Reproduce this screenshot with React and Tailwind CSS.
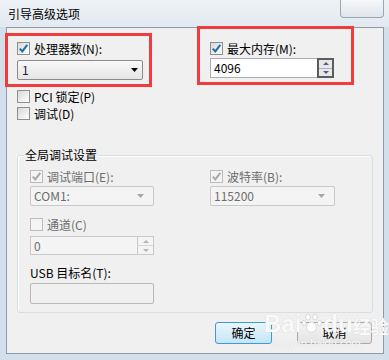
// App.jsx — Windows 7 style "引导高级选项" dialog
import React from 'react';

function Check({ checked, disabled }) {
  return (
    <span
      className={
        disabled
          ? 'w-[13px] h-[13px] shrink-0 border border-[#bcbcbc] bg-[#f4f4f4] flex items-center justify-center'
          : 'w-[13px] h-[13px] shrink-0 border border-[#8e8f8f] bg-linear-to-br from-[#d8d8d8] to-[#ffffff] flex items-center justify-center'
      }
    >
      {checked && (
        <svg width="11" height="11" viewBox="0 0 11 11">
          <path
            d="M1.8 5.6 L4.3 8.4 L9.3 1.8"
            fill="none"
            stroke={disabled ? '#a9a9a9' : '#1d6fa5'}
            strokeWidth="2"
          />
        </svg>
      )}
    </span>
  );
}

function CheckRow({ checked, disabled, children }) {
  return (
    <div className="flex items-center h-[13px] gap-[4px]">
      <Check checked={checked} disabled={disabled} />
      <span className={disabled ? 'text-[12px] leading-[14px] text-[#6d6d6d]' : 'text-[12px] leading-[14px] text-black'}>
        {children}
      </span>
    </div>
  );
}

function Combo({ value, disabled, w }) {
  return (
    <div
      className={
        disabled
          ? `${w} h-[20px] rounded-[2px] border border-[#c9c9c9] bg-[#f4f4f4] flex items-center justify-between pl-[3px] pr-[9px]`
          : `${w} h-[20px] rounded-[2px] border border-[#8a8a8a] bg-linear-to-b from-[#f8f8f8] to-[#e6e6e6] flex items-center justify-between pl-[4px] pr-[4px]`
      }
    >
      <span className={disabled ? 'text-[12px] leading-[14px] text-[#6d6d6d]' : 'text-[12px] leading-[14px] text-[#1a1a4a]'}>
        {value}
      </span>
      <svg width="7" height="4" viewBox="0 0 7 4">
        <path d="M0 0 H7 L3.5 4 Z" fill={disabled ? '#a6a6a6' : '#000'} />
      </svg>
    </div>
  );
}

function Spin({ value, disabled }) {
  const arrow = disabled ? '#b4b4b4' : '#4a5f8f';
  return (
    <div className={disabled ? 'flex w-[124px] h-[19px]' : 'flex w-[124px] h-[20px]'}>
      <div
        className={
          disabled
            ? 'flex-1 border border-[#c9c9c9] border-r-0 bg-[#f4f4f4] flex items-center pl-[3px] text-[12px] leading-[14px] text-[#6d6d6d]'
            : 'flex-1 border border-[#abadb3] border-r-0 bg-white flex items-center pl-[3px] text-[12px] leading-[14px] text-black'
        }
      >
        {value}
      </div>
      <div
        className={
          disabled
            ? 'w-[17px] border border-[#c9c9c9] bg-[#f4f4f4] flex flex-col'
            : 'w-[17px] border-2 border-[#5c5c5c] bg-[#d9d9d9] flex flex-col'
        }
      >
        <div className={disabled ? 'flex-1 border-b border-[#d6d6d6] flex items-center justify-center' : 'flex-1 border-b border-[#b0b0b0] bg-[#e8e8e8] flex items-center justify-center'}>
          <svg width="6" height="3" viewBox="0 0 6 3">
            <path d="M0 3 L3 0 L6 3 Z" fill={arrow} />
          </svg>
        </div>
        <div className={disabled ? 'flex-1 flex items-center justify-center' : 'flex-1 bg-[#e8e8e8] flex items-center justify-center'}>
          <svg width="6" height="3" viewBox="0 0 6 3">
            <path d="M0 0 H6 L3 3 Z" fill={arrow} />
          </svg>
        </div>
      </div>
    </div>
  );
}

export default function App() {
  return (
    <div className="w-[389px] h-[360px] relative overflow-hidden bg-[#d3dfea] font-['Noto_Sans_CJK_SC','Noto_Sans',sans-serif]">
      {/* title bar */}
      <div className="h-[27px] flex justify-between bg-linear-to-b from-[#eef2f6] to-[#e2e9f0]">
        <div className="pl-[8px] self-center text-[12px] leading-[14px] text-black">引导高级选项</div>
        <div className="self-start w-[44px] h-[18px] mr-[5px] rounded-b-[4px] border border-t-0 border-[#9aa7b5] bg-linear-to-b from-[#f6f8fa] to-[#dfe5ec]" />
      </div>

      {/* client area */}
      <div className="ml-[6px] w-[378px] h-[327px] border border-[#8f9aa6] bg-[#f0f0f0] flex flex-col">
        <div className="flex pl-[10px] pt-[14px]">
          <div className="w-[193px] flex flex-col">
            <CheckRow checked>处理器数(N):</CheckRow>
            <div className="mt-[5px]">
              <Combo value="1" w="w-[126px]" />
            </div>
            <div className="mt-[10px]">
              <CheckRow>PCI 锁定(P)</CheckRow>
            </div>
            <div className="mt-[4px]">
              <CheckRow>调试(D)</CheckRow>
            </div>
          </div>
          <div className="flex flex-col">
            <CheckRow checked>最大内存(M):</CheckRow>
            <div className="mt-[3px]">
              <Spin value="4096" />
            </div>
          </div>
        </div>

        {/* group box */}
        <div className="mt-[35px] ml-[10px] w-[356px] h-[158px] relative rounded-[3px] border border-[#d5dfe5] shadow-[inset_1px_1px_0_#ffffff]">
          <span className="absolute left-[6px] -top-[8px] px-[1px] bg-[#f0f0f0] text-[12px] leading-[14px] text-black">
            全局调试设置
          </span>
          <div className="flex flex-col pl-[12px] pt-[14px]">
            <div className="flex">
              <div className="w-[180px] flex flex-col">
                <CheckRow checked disabled>调试端口(E):</CheckRow>
                <div className="mt-[3px]">
                  <Combo value="COM1:" disabled w="w-[124px]" />
                </div>
              </div>
              <div className="flex flex-col">
                <CheckRow checked disabled>波特率(B):</CheckRow>
                <div className="mt-[3px]">
                  <Combo value="115200" disabled w="w-[125px]" />
                </div>
              </div>
            </div>
            <div className="mt-[12px]">
              <CheckRow disabled>通道(C)</CheckRow>
            </div>
            <div className="mt-[5px]">
              <Spin value="0" disabled />
            </div>
            <div className="mt-[11px] text-[12px] leading-[14px] text-black">USB 目标名(T):</div>
            <div className="mt-[3px] w-[124px] h-[21px] border border-[#b9b9b9] rounded-[2px] bg-[#f0f0f0]" />
          </div>
        </div>

        {/* buttons */}
        <div className="flex justify-end gap-[25px] pr-[11px] mt-[9px]">
          <button className="w-[57px] h-[22px] rounded-[3px] border border-[#3c9bd2] bg-linear-to-b from-[#eaf6fd] to-[#c4e5f8] text-[12px] leading-[14px] text-black">
            确定
          </button>
          <button className="w-[75px] h-[22px] rounded-[3px] border border-[#a8a8a8] bg-linear-to-b from-[#f4f4f4] to-[#e4e4e4] text-[12px] leading-[14px] text-black">
            取消
          </button>
        </div>
      </div>

      {/* annotation boxes */}
      <div className="absolute left-[5px] top-[33px] w-[147px] h-[54px] border-[3px] border-[#f03c3c]" />
      <div className="absolute left-[197px] top-[26px] w-[157px] h-[59px] border-[3px] border-[#f03c3c]" />

      {/* watermark */}
      <div className="absolute left-[264px] top-[311px] flex flex-col items-start text-white/90 [text-shadow:0_0_1px_#c4c4c4] pointer-events-none">
        <div className="flex items-end text-[24px] leading-[26px] font-bold font-['Liberation_Sans',sans-serif]">
          <span>Bai</span>
          <svg width="22" height="22" viewBox="0 0 22 22" className="mb-[3px]">
            <g fill="#ffffff" stroke="#c8c8c8" strokeWidth="0.7">
              <ellipse cx="7" cy="5" rx="2.3" ry="3" />
              <ellipse cx="14" cy="5" rx="2.3" ry="3" />
              <ellipse cx="3" cy="11" rx="2" ry="2.6" />
              <ellipse cx="18.5" cy="11" rx="2" ry="2.6" />
              <path d="M10.5 10 C6 10 4 17 7 19 C9 20.5 12 20.5 14 19 C17 17 15 10 10.5 10 Z" />
            </g>
          </svg>
          <span>du</span>
          <span className="text-[18px] leading-[22px] font-['Noto_Sans_CJK_SC',sans-serif]">经验</span>
        </div>
        <div className="ml-[8px] text-[11px] leading-[12px] font-['Liberation_Sans',sans-serif]">jingyan.baidu.com</div>
      </div>
    </div>
  );
}
